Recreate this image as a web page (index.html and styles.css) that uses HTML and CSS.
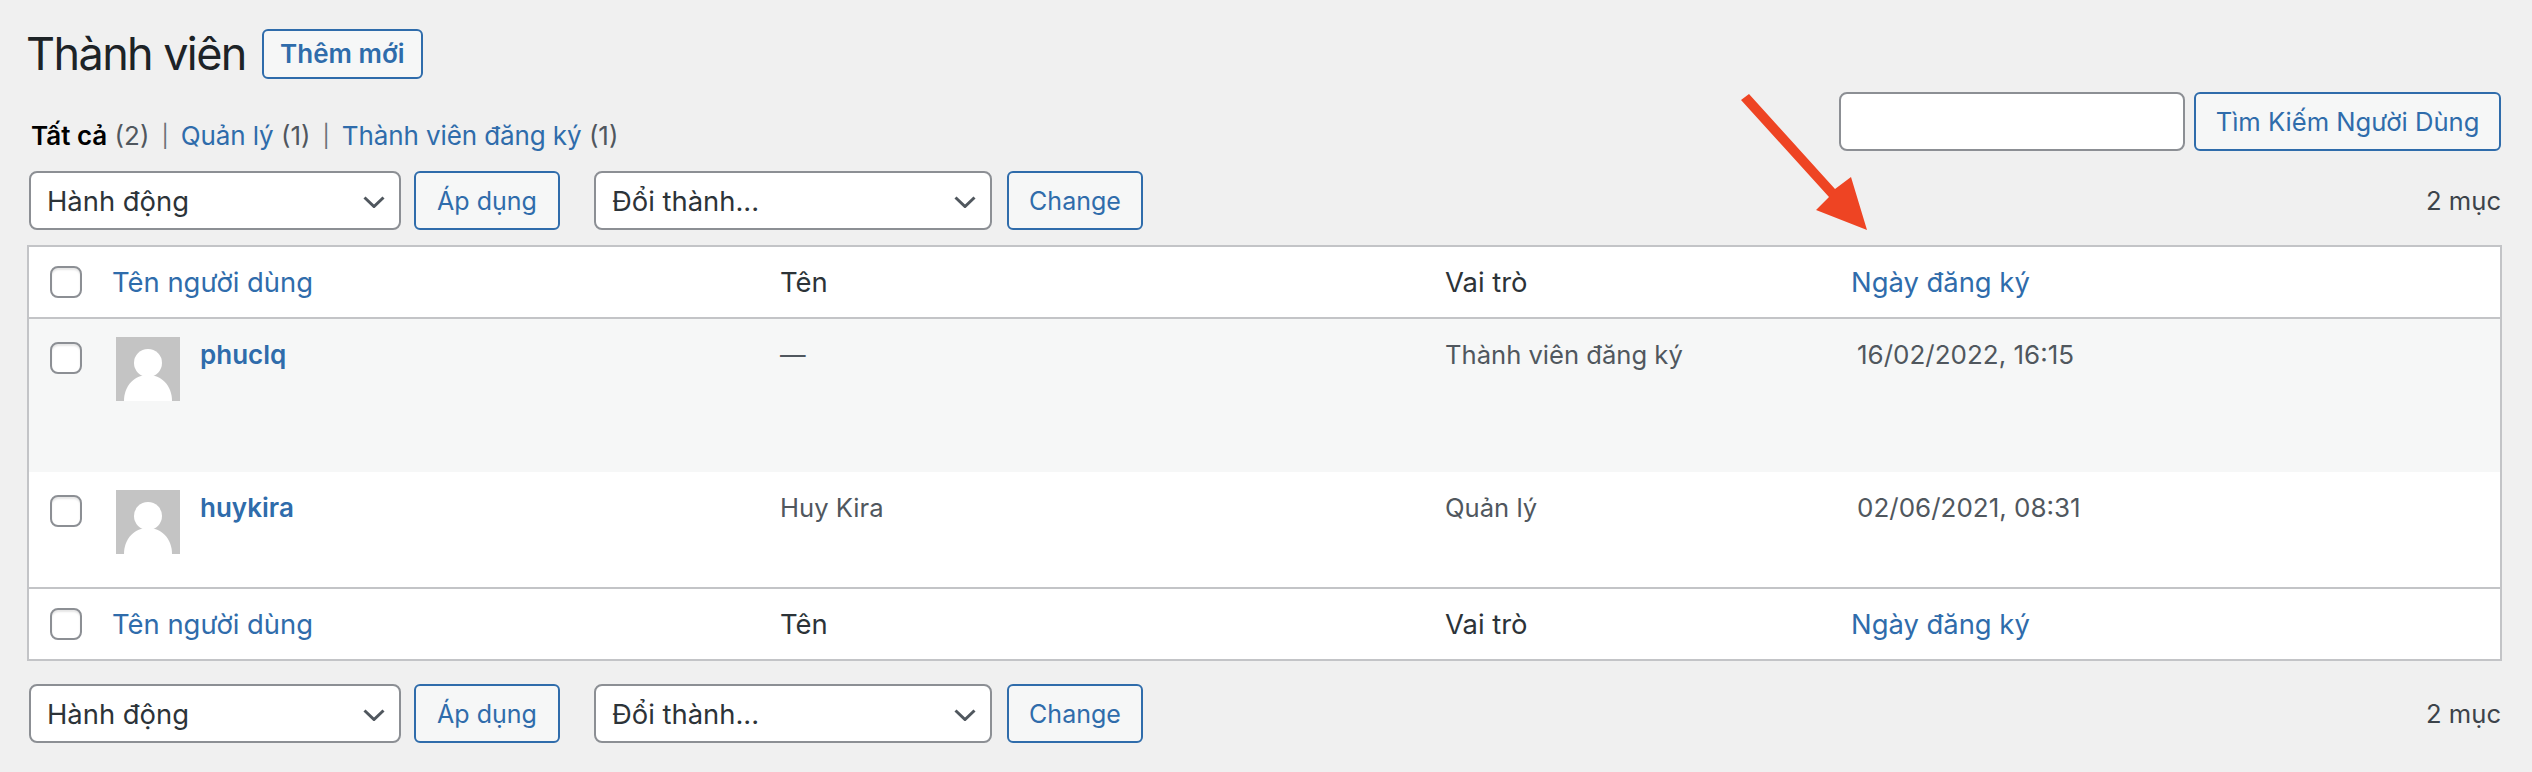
FILE: index.html
```html
<!DOCTYPE html>
<html lang="vi">
<head>
  <meta charset="UTF-8" />
  <title>Thành viên</title>
  <link rel="stylesheet" href="styles.css">
</head>
<body>
  <div class="wrap">
    <div class="page-head">
      <h1>Thành viên</h1>
      <a class="btn btn-add" href="#">Thêm mới</a>
    </div>

    <div class="filter-row">
      <ul class="subsub">
        <li><a class="current" href="#">Tất cả</a> <span class="count">(2)</span></li>
        <li class="sep">|</li>
        <li><a href="#">Quản lý</a> <span class="count">(1)</span></li>
        <li class="sep">|</li>
        <li><a href="#">Thành viên đăng ký</a> <span class="count">(1)</span></li>
      </ul>
      <form class="search-box">
        <input class="search-input" type="search" />
        <button class="btn btn-search" type="button">Tìm Kiếm Người Dùng</button>
      </form>
    </div>

    <div class="tablenav tablenav-top">
      <div class="select-box select-action">
        <select><option>Hành động</option></select>
        <svg class="chevron" viewBox="0 0 22 12"><path d="M1.5 1.5 11 10.5 20.5 1.5" /></svg>
      </div>
      <button class="btn btn-apply" type="button">Áp dụng</button>
      <div class="select-box select-role">
        <select><option>Đổi thành...</option></select>
        <svg class="chevron" viewBox="0 0 22 12"><path d="M1.5 1.5 11 10.5 20.5 1.5" /></svg>
      </div>
      <button class="btn btn-change" type="button">Change</button>
      <div class="num-items">2 mục</div>
    </div>

    <table class="users">
      <colgroup>
        <col class="col-check"><col class="col-user"><col class="col-name"><col class="col-role"><col class="col-date">
      </colgroup>
      <thead>
        <tr>
          <th class="check"><input class="cb" type="checkbox" /></th>
          <th class="th-user"><a href="#">Tên người dùng</a></th>
          <th>Tên</th>
          <th>Vai trò</th>
          <th class="th-date"><a href="#">Ngày đăng ký</a></th>
        </tr>
      </thead>
      <tbody>
        <tr class="row-tall alt">
          <td class="check"><input class="cb" type="checkbox" /></td>
          <td>
            <svg class="avatar" viewBox="0 0 64 64"><rect width="64" height="64" fill="#c4c4c4" /><circle cx="32" cy="26" r="14" fill="#fff" /><path d="M8 64C8 48 19 38 32 38s24 10 24 26z" fill="#fff" /></svg>
            <a class="username" href="#">phuclq</a>
          </td>
          <td>—</td>
          <td>Thành viên đăng ký</td>
          <td class="date">16/02/2022, 16:15</td>
        </tr>
        <tr class="row-short">
          <td class="check"><input class="cb" type="checkbox" /></td>
          <td>
            <svg class="avatar" viewBox="0 0 64 64"><rect width="64" height="64" fill="#c4c4c4" /><circle cx="32" cy="26" r="14" fill="#fff" /><path d="M8 64C8 48 19 38 32 38s24 10 24 26z" fill="#fff" /></svg>
            <a class="username" href="#">huykira</a>
          </td>
          <td>Huy Kira</td>
          <td>Quản lý</td>
          <td class="date">02/06/2021, 08:31</td>
        </tr>
      </tbody>
      <tfoot>
        <tr>
          <th class="check"><input class="cb" type="checkbox" /></th>
          <th class="th-user"><a href="#">Tên người dùng</a></th>
          <th>Tên</th>
          <th>Vai trò</th>
          <th class="th-date"><a href="#">Ngày đăng ký</a></th>
        </tr>
      </tfoot>
    </table>

    <div class="tablenav tablenav-bottom">
      <div class="select-box select-action">
        <select><option>Hành động</option></select>
        <svg class="chevron" viewBox="0 0 22 12"><path d="M1.5 1.5 11 10.5 20.5 1.5" /></svg>
      </div>
      <button class="btn btn-apply" type="button">Áp dụng</button>
      <div class="select-box select-role">
        <select><option>Đổi thành...</option></select>
        <svg class="chevron" viewBox="0 0 22 12"><path d="M1.5 1.5 11 10.5 20.5 1.5" /></svg>
      </div>
      <button class="btn btn-change" type="button">Change</button>
      <div class="num-items">2 mục</div>
    </div>
  </div>

  <svg class="arrow" viewBox="0 0 140 150">
    <polygon points="2,10 10,4 96,99 112,87 128,140 77,120 90,107" />
  </svg>
</body>
</html>
```

FILE: styles.css
```css
* {
  box-sizing: border-box;
}

body {
  margin: 0;
  background: #f0f0f0;
  color: #3c434a;
  font-family: Inter, "Liberation Sans", sans-serif;
  font-size: 26px;
  line-height: 36px;
  position: relative;
  overflow: hidden;
  height: 772px;
}

a {
  color: #2f6cab;
  text-decoration: none;
}

.wrap {
  padding: 29px 31px 0 27px;
}

.page-head {
  display: flex;
  align-items: center;
  gap: 16px;
  height: 50px;
}

h1 {
  margin: 0 0 0 -1px;
  font-size: 45px;
  font-weight: 400;
  line-height: 50px;
  letter-spacing: -1.6px;
  color: #1d2327;
}

.btn {
  display: inline-flex;
  align-items: center;
  justify-content: center;
  height: 59px;
  padding: 0;
  background: #f6f7f7;
  border: 2px solid #2f6cab;
  border-radius: 6px;
  color: #2f6cab;
  font-family: inherit;
  font-size: 25px;
}

.btn-add {
  width: 161px;
  height: 50px;
  font-size: 26px;
  font-weight: 600;
}

.filter-row {
  display: flex;
  justify-content: space-between;
  align-items: flex-end;
  margin-top: 13px;
  height: 59px;
}

.subsub {
  display: flex;
  gap: 12px;
  list-style: none;
  margin: 0 0 0 4px;
  padding: 0;
  color: #50575e;
  position: relative;
  top: 3px;
}

.subsub .sep {
  font-size: 22px;
  color: #6b7177;
}

.subsub a {
  letter-spacing: -0.1px;
}

.subsub .current {
  color: #000;
  font-weight: 600;
  letter-spacing: 0;
}

.search-box {
  display: flex;
  gap: 9px;
}

.search-input {
  width: 346px;
  height: 59px;
  background: #fff;
  border: 2px solid #8c8f94;
  border-radius: 8px;
}

.btn-search {
  width: 307px;
  font-size: 25.6px;
}

.tablenav {
  display: flex;
  align-items: center;
  height: 59px;
  padding-left: 2px;
}

.tablenav-top {
  margin-top: 20px;
}

.tablenav-bottom {
  margin-top: 23px;
}

.select-box {
  position: relative;
  height: 59px;
}

.select-box select {
  appearance: none;
  width: 100%;
  height: 100%;
  padding: 0 0 0 16px;
  background: #fff;
  border: 2px solid #8c8f94;
  border-radius: 8px;
  color: #2c3338;
  font-family: inherit;
  font-size: 27.4px;
}

.chevron {
  position: absolute;
  top: 25px;
  right: 16px;
  width: 22px;
  height: 12px;
  fill: none;
  stroke: #50575e;
  stroke-width: 3;
}

.select-action {
  width: 372px;
}

.select-role {
  width: 398px;
  margin-left: 34px;
}

.btn-apply {
  width: 146px;
  margin-left: 13px;
}

.btn-change {
  width: 136px;
  margin-left: 15px;
}

.num-items {
  margin-left: auto;
  color: #3c434a;
  font-size: 25.6px;
}

.users {
  width: 2475px;
  margin-top: 15px;
  background: #fff;
  border: 2px solid #c3c4c7;
  border-collapse: separate;
  border-spacing: 0;
  table-layout: fixed;
}

.col-check { width: 67px; }
.col-user { width: 664px; }
.col-name { width: 665px; }
.col-role { width: 412px; }

.users th {
  height: 72px;
  padding: 0 20px;
  font-size: 27.4px;
  font-weight: 400;
  text-align: left;
  color: #2c3338;
}

.users thead th {
  border-bottom: 2px solid #c3c4c7;
}

.users tfoot th {
  border-top: 2px solid #c3c4c7;
}

.users th.check {
  padding: 0 0 0 21px;
}

.users .th-user {
  padding-left: 16px;
}

.users .th-date {
  padding-left: 14px;
}

.users td {
  padding: 18px 20px 0;
  vertical-align: top;
  font-size: 25.6px;
  color: #50575e;
}

.users td.check {
  padding: 23px 0 0 21px;
}

.users td.date {
  font-size: 26px;
}

.row-tall {
  height: 153px;
}

.row-short {
  height: 115px;
}

.alt td {
  background: #f6f7f7;
}

.cb {
  appearance: none;
  display: block;
  width: 32px;
  height: 32px;
  margin: 0;
  background: #fff;
  border: 2px solid #8c8f94;
  border-radius: 8px;
  box-shadow: inset 0 2px 2px rgba(0, 0, 0, 0.1);
}

.avatar {
  float: left;
  width: 64px;
  height: 64px;
  margin-right: 20px;
}

.username {
  font-size: 26px;
  font-weight: 600;
}

/* mui ten do chi vao cot ngay dang ky */
.arrow {
  position: absolute;
  left: 1739px;
  top: 90px;
  width: 140px;
  height: 150px;
  fill: #ee4423;
}
```
